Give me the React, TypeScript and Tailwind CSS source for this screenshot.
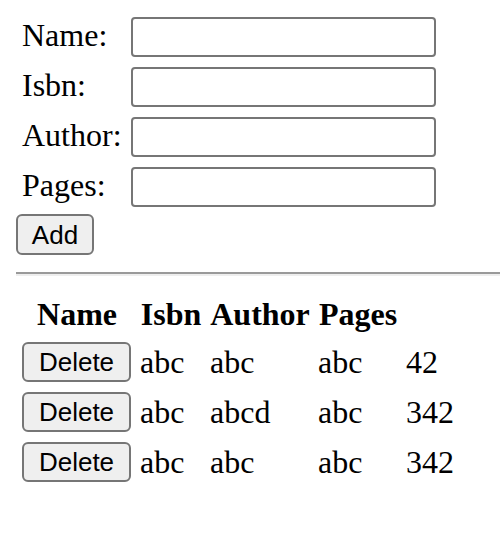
const fields = ["Name:", "Isbn:", "Author:", "Pages:"];

const books = [
  { name: "abc", isbn: "abc", author: "abc", pages: 42 },
  { name: "abc", isbn: "abcd", author: "abc", pages: 342 },
  { name: "abc", isbn: "abc", author: "abc", pages: 342 },
];

const btn =
  "block h-[40px] border-2 border-[#767676] rounded-[6px] bg-[#efefef] font-['Liberation_Sans',Arial,sans-serif] text-[26px] leading-none text-black";

export default function App() {
  return (
    <div className="min-h-[534px] bg-white pl-[16px] pt-[17px] font-['Liberation_Serif','Times_New_Roman',serif] text-[32px] leading-[normal] text-black">
      <div className="grid w-fit grid-cols-[109px_305px] auto-rows-[40px] items-center gap-y-[10px] pl-[6px]">
        {fields.map((f) => (
          <div key={f} className="contents">
            <span className="whitespace-nowrap pb-[4px]">{f}</span>
            <input
              type="text"
              className="h-[40px] w-[305px] rounded-[4px] border-2 border-[#767676] bg-white px-[4px] outline-none"
            />
          </div>
        ))}
      </div>
      <button className={btn + " mt-[7px] h-[41px] w-[78px]"}>Add</button>

      <hr className="mt-[17px] border-t-2 border-b-2 border-t-[#9a9a9a] border-b-[#eeeeee]" />

      <table className="mt-[14px] border-separate border-spacing-[4px]">
        <thead>
          <tr>
            <th className="w-[114px] p-[2px] text-center font-bold">Name</th>
            <th className="w-[66px] p-[2px] text-center font-bold">Isbn</th>
            <th className="w-[104px] p-[2px] text-center font-bold">Author</th>
            <th className="w-[84px] p-[2px] text-center font-bold">Pages</th>
          </tr>
        </thead>
        <tbody>
          {books.map((b, i) => (
            <tr key={i}>
              <td className="px-[2px] py-[3px]">
                <button className={btn + " w-[109px]"}>Delete</button>
              </td>
              <td className="px-[2px] py-[3px] whitespace-nowrap">{b.name}</td>
              <td className="px-[2px] py-[3px] whitespace-nowrap">{b.isbn}</td>
              <td className="px-[2px] py-[3px] whitespace-nowrap">{b.author}</td>
              <td className="px-[2px] py-[3px] whitespace-nowrap">{b.pages}</td>
            </tr>
          ))}
        </tbody>
      </table>
    </div>
  );
}
